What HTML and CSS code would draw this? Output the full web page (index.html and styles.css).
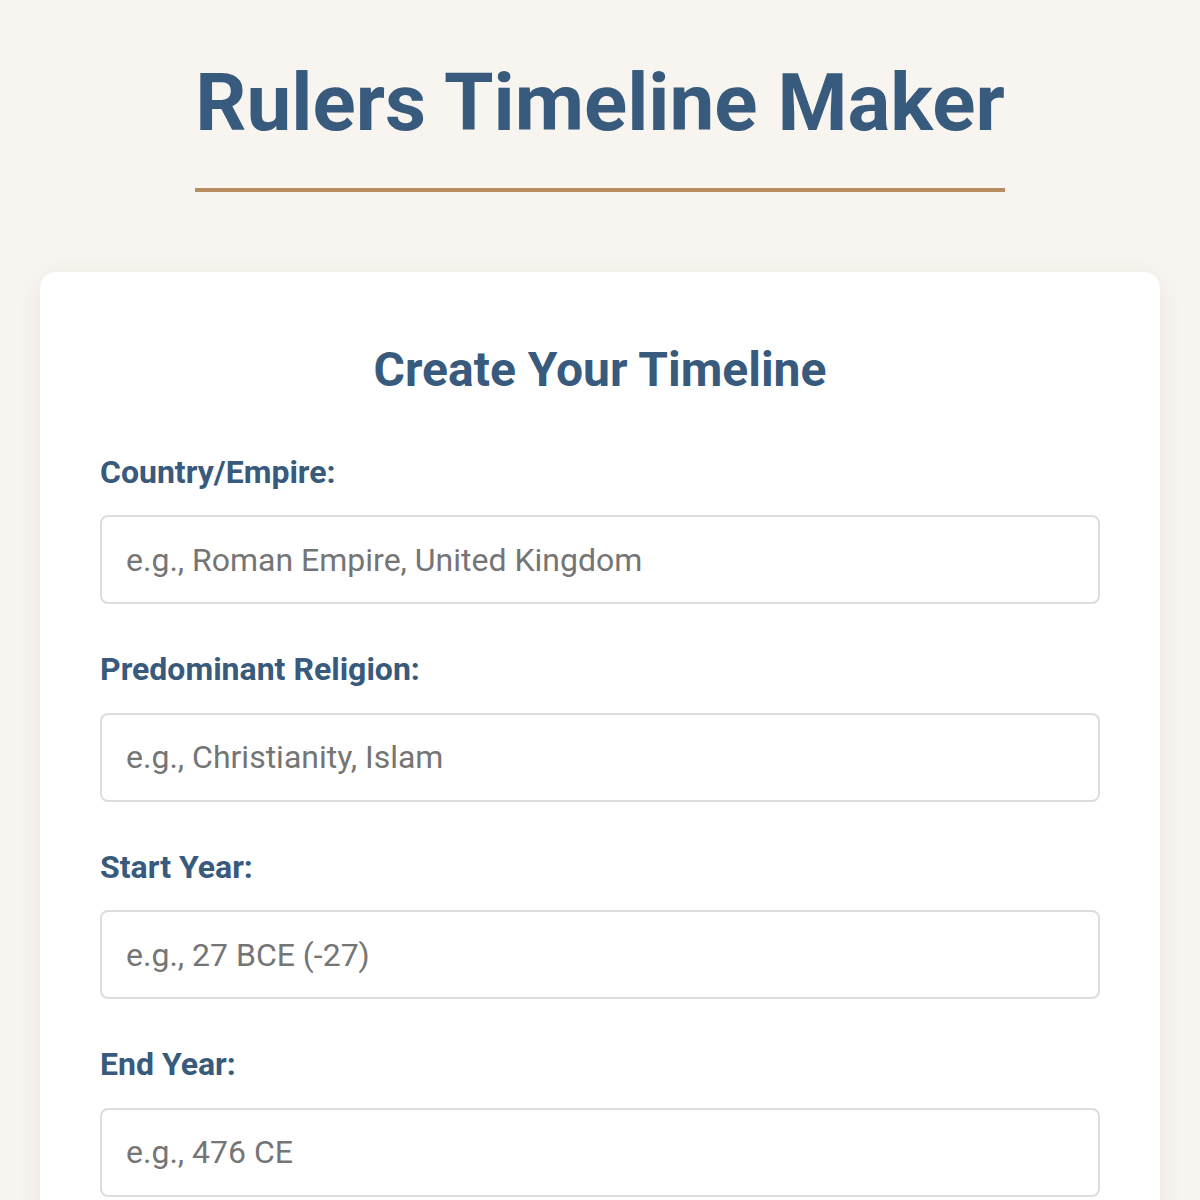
FILE: index.html
```html
<!DOCTYPE html>
<html lang="en">
<head>
<meta charset="utf-8">
<title>Rulers Timeline Maker</title>
<link rel="stylesheet" href="styles.css">
</head>
<body>
<header class="page-header">
  <h1 class="page-title">Rulers Timeline Maker</h1>
</header>
<main class="card">
  <h2 class="card-title">Create Your Timeline</h2>
  <form class="timeline-form">
    <div class="form-group">
      <label class="form-label" for="country">Country/Empire:</label>
      <input class="form-input" id="country" type="text" placeholder="e.g., Roman Empire, United Kingdom">
    </div>
    <div class="form-group">
      <label class="form-label" for="religion">Predominant Religion:</label>
      <input class="form-input" id="religion" type="text" placeholder="e.g., Christianity, Islam">
    </div>
    <div class="form-group">
      <label class="form-label" for="start">Start Year:</label>
      <input class="form-input" id="start" type="text" placeholder="e.g., 27 BCE (-27)">
    </div>
    <div class="form-group">
      <label class="form-label" for="end">End Year:</label>
      <input class="form-input" id="end" type="text" placeholder="e.g., 476 CE">
    </div>
  </form>
</main>
</body>
</html>
```

FILE: styles.css
```css
* { box-sizing: border-box; }

html, body {
  margin: 0;
  padding: 0;
}

body {
  background: #f8f5f0;
  font-family: Roboto, "Liberation Sans", Arial, sans-serif;
  color: #385a7c;
  padding: 0 40px 40px;
}

.page-header {
  display: flex;
  justify-content: center;
  padding-top: 57px;
}

.page-title {
  display: inline-block;
  margin: 0;
  font-size: 80px;
  font-weight: 700;
  line-height: 1.171;
  color: #385a7c;
  padding-bottom: 37px;
  border-bottom: 4px solid #b98b60;
}

.card {
  margin-top: 80px;
  background: #ffffff;
  border-radius: 16px;
  box-shadow: 0 6px 24px rgba(90, 70, 40, 0.09);
  padding: 70px 60px 60px;
}

.card-title {
  margin: 0 0 56px;
  text-align: center;
  font-size: 48px;
  font-weight: 700;
  line-height: 1.171;
  color: #385a7c;
}

.timeline-form {
  display: flex;
  flex-direction: column;
  gap: 47px;
}

.form-group {
  display: flex;
  flex-direction: column;
  gap: 24px;
}

.form-label {
  font-size: 32px;
  font-weight: 700;
  line-height: 1.171;
  color: #385a7c;
}

.form-input {
  height: 89px;
  width: 100%;
  border: 2px solid #dddddd;
  border-radius: 8px;
  padding: 0 24px;
  font-family: Roboto, "Liberation Sans", Arial, sans-serif;
  font-size: 32px;
  color: #333;
  background: #fff;
  outline: none;
}

.form-input::placeholder {
  color: #757575;
  opacity: 1;
}
```
